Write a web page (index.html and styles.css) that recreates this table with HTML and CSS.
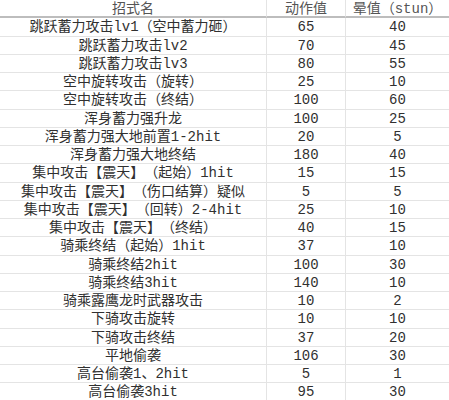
FILE: index.html
```html
<!DOCTYPE html>
<html lang="zh-CN">
<head>
<meta charset="utf-8">
<title>招式表</title>
<link rel="stylesheet" href="styles.css">
</head>
<body>
<div class="sheet">
  <div class="cell head name">招式名</div><div class="cell head mv">动作值</div><div class="cell head st">晕值（stun）</div>
  <div class="cell name">跳跃蓄力攻击lv1（空中蓄力砸）</div><div class="cell mv">65</div><div class="cell st">40</div>
  <div class="cell name">跳跃蓄力攻击lv2</div><div class="cell mv">70</div><div class="cell st">45</div>
  <div class="cell name">跳跃蓄力攻击lv3</div><div class="cell mv">80</div><div class="cell st">55</div>
  <div class="cell name">空中旋转攻击（旋转）</div><div class="cell mv">25</div><div class="cell st">10</div>
  <div class="cell name">空中旋转攻击（终结）</div><div class="cell mv">100</div><div class="cell st">60</div>
  <div class="cell name">浑身蓄力强升龙</div><div class="cell mv">100</div><div class="cell st">25</div>
  <div class="cell name">浑身蓄力强大地前置1-2hit</div><div class="cell mv">20</div><div class="cell st">5</div>
  <div class="cell name">浑身蓄力强大地终结</div><div class="cell mv">180</div><div class="cell st">40</div>
  <div class="cell name">集中攻击【震天】（起始）1hit</div><div class="cell mv">15</div><div class="cell st">15</div>
  <div class="cell name">集中攻击【震天】（伤口结算）疑似</div><div class="cell mv">5</div><div class="cell st">5</div>
  <div class="cell name">集中攻击【震天】（回转）2-4hit</div><div class="cell mv">25</div><div class="cell st">10</div>
  <div class="cell name">集中攻击【震天】（终结）</div><div class="cell mv">40</div><div class="cell st">15</div>
  <div class="cell name">骑乘终结（起始）1hit</div><div class="cell mv">37</div><div class="cell st">10</div>
  <div class="cell name">骑乘终结2hit</div><div class="cell mv">100</div><div class="cell st">30</div>
  <div class="cell name">骑乘终结3hit</div><div class="cell mv">140</div><div class="cell st">10</div>
  <div class="cell name">骑乘露鹰龙时武器攻击</div><div class="cell mv">10</div><div class="cell st">2</div>
  <div class="cell name">下骑攻击旋转</div><div class="cell mv">10</div><div class="cell st">10</div>
  <div class="cell name">下骑攻击终结</div><div class="cell mv">37</div><div class="cell st">20</div>
  <div class="cell name">平地偷袭</div><div class="cell mv">106</div><div class="cell st">30</div>
  <div class="cell name">高台偷袭1、2hit</div><div class="cell mv">5</div><div class="cell st">1</div>
  <div class="cell name">高台偷袭3hit</div><div class="cell mv">95</div><div class="cell st">30</div>
</div>
</body>
</html>
```
FILE: styles.css
```css
html, body {
  margin: 0;
  padding: 0;
  background: #ffffff;
}

.sheet {
  display: grid;
  grid-template-columns: 267px 79px 103px;
  grid-auto-rows: 18.25px;
  width: 449px;
  font-family: "Liberation Mono", "Noto Sans CJK SC", monospace;
  font-size: 14px;
  color: #303030;
  text-spacing-trim: space-all;
}

.cell {
  box-sizing: border-box;
  display: flex;
  align-items: center;
  justify-content: center;
  white-space: nowrap;
  border-bottom: 1px solid #e4e4e4;
  line-height: 1;
  padding-top: 1px;
}

.name,
.mv {
  border-right: 1px solid #e4e4e4;
}

.head {
  border-bottom: 2px solid #bdbdbd;
  color: #555555;
}
```
